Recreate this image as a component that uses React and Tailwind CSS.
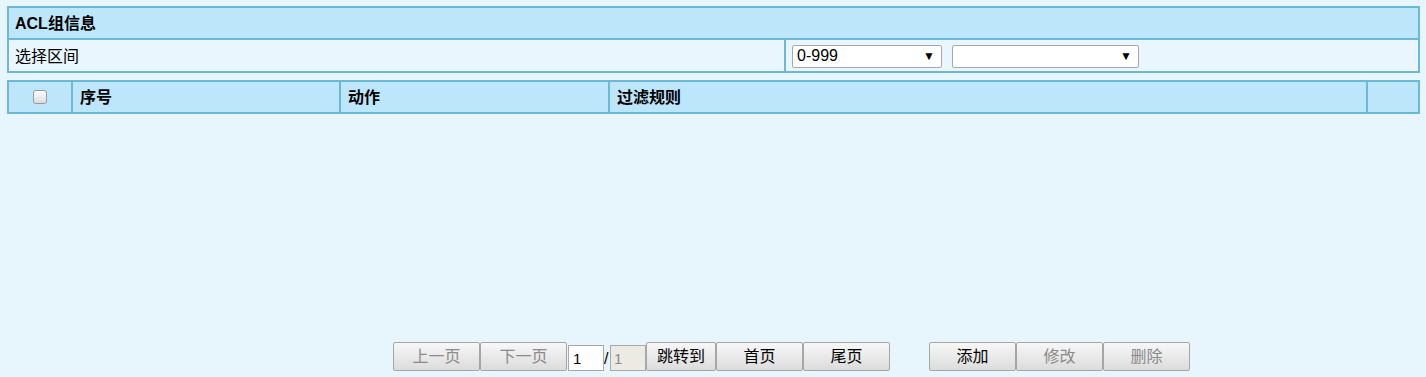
import React from 'react';

const font = "font-['Liberation_Sans','Noto_Sans_CJK_SC',sans-serif]";

const Btn = ({ children, disabled, w = 'w-[87px]' }) => (
  <button
    className={`${w} h-[29px] border border-[#a6a6a6] rounded-[2px] bg-gradient-to-b from-[#f7f7f7] to-[#dcdcdc] text-[16px] leading-none ${
      disabled ? 'text-[#8a8a8a]' : 'text-black'
    }`}
  >
    {children}
  </button>
);

const FakeSelect = ({ value, w }) => (
  <div className={`${w} h-[23px] bg-white border border-[#a9a9a9] rounded-[2px] flex items-center justify-between pl-[4px] pr-[6px]`}>
    <span className="text-[16px] text-black">{value}</span>
    <span className="text-[12px] text-black">▼</span>
  </div>
);

export default function App() {
  return (
    <div className={`w-full h-[377px] bg-[#e7f5fd] flex flex-col pt-[6px] ${font}`}>
      {/* ACL group info */}
      <div className="ml-[7px] w-[1413px] border-2 border-[#6bb9d4]">
        <div className="h-[32px] bg-[#bde6fb] border-b-2 border-[#6bb9d4] flex items-center pl-[6px] pt-[2px]">
          <span className="text-[16px] font-bold text-black">ACL组信息</span>
        </div>
        <div className="h-[31px] bg-[#e9f6fe] flex">
          <div className="w-[777px] border-r-2 border-[#6bb9d4] flex items-center pl-[6px] pt-[3px]">
            <span className="text-[16px] text-black">选择区间</span>
          </div>
          <div className="flex items-center pl-[6px] gap-[10px] pt-[1px]">
            <FakeSelect value="0-999" w="w-[150px]" />
            <FakeSelect value="" w="w-[187px]" />
          </div>
        </div>
      </div>

      {/* rule table header */}
      <div className="ml-[7px] mt-[7px] w-[1413px] border-2 border-[#6bb9d4] bg-[#bde6fb] h-[34px] flex">
        <div className="w-[64px] border-r-2 border-[#6bb9d4] flex items-center justify-center">
          <div className="w-[14px] h-[14px] rounded-[3px] border border-[#9a9a9a] bg-gradient-to-b from-[#fcfcfc] to-[#dedede]" />
        </div>
        <div className="w-[268px] border-r-2 border-[#6bb9d4] flex items-center pl-[7px] pt-[2px]">
          <span className="text-[16px] font-bold text-black">序号</span>
        </div>
        <div className="w-[269px] border-r-2 border-[#6bb9d4] flex items-center pl-[7px] pt-[2px]">
          <span className="text-[16px] font-bold text-black">动作</span>
        </div>
        <div className="w-[758px] border-r-2 border-[#6bb9d4] flex items-center pl-[7px] pt-[2px]">
          <span className="text-[16px] font-bold text-black">过滤规则</span>
        </div>
        <div className="flex-1" />
      </div>

      <div className="flex-1" />

      {/* pager + actions */}
      <div className="flex items-end pl-[393px] pb-[6px]">
        <Btn disabled>上一页</Btn>
        <Btn disabled>下一页</Btn>
        <input
          defaultValue="1"
          className="ml-[1px] w-[36px] h-[26px] bg-white border border-[#a9a9a9] text-[15px] pl-[4px] outline-none"
        />
        <span className="w-[6px] text-[16px] leading-[24px] text-black">/</span>
        <input
          defaultValue="1"
          disabled
          className="w-[36px] h-[26px] bg-[#ebebe4] border border-[#a9a9a9] text-[15px] pl-[3px] text-[#8a8a8a]"
        />
        <Btn w="w-[70px]">跳转到</Btn>
        <Btn>首页</Btn>
        <Btn>尾页</Btn>
        <div className="w-[39px]" />
        <Btn>添加</Btn>
        <Btn disabled>修改</Btn>
        <Btn disabled>删除</Btn>
      </div>
    </div>
  );
}
